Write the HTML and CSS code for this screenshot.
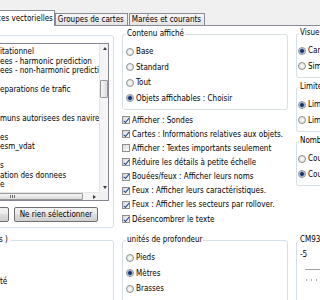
FILE: index.html
```html
<!DOCTYPE html>
<html lang="fr">
<head>
  <meta charset="UTF-8">
  <title>Cartes vectorielles</title>
  <link rel="stylesheet" href="styles.css">
</head>
<body>

  <div class="tabs">
    <div class="tab active">ces vectorielles</div>
    <div class="tab">Groupes de cartes</div>
    <div class="tab tab-next">Marées et courants</div>
  </div>

  <div class="panel">
    <div class="cols top">

      <!-- Liste des objets -->
      <div class="objets">
        <div class="listbox">
          <div class="items">
            <div>itationnel</div>
            <div>ees - harmonic prediction</div>
            <div>ees - non-harmonic prediction</div>
            <div>&nbsp;</div>
            <div>eparations de trafic</div>
            <div>&nbsp;</div>
            <div>&nbsp;</div>
            <div>muns autorisees des navires</div>
            <div>&nbsp;</div>
            <div>es</div>
            <div>esm_vdat</div>
            <div>&nbsp;</div>
            <div>s</div>
            <div>ation des donnees</div>
            <div>e</div>
          </div>
          <div class="vscroll">
            <span class="btn-arrow"><span class="arrow up"></span></span>
            <span class="vtrack"><span class="vthumb"></span></span>
            <span class="btn-arrow"><span class="arrow down"></span></span>
          </div>
          <div class="hscroll">
            <span class="hthumb"><span class="grip"></span></span>
            <span class="htrack"></span>
            <span class="btn-arrow"><span class="arrow right"></span></span>
          </div>
          <div class="corner"></div>
        </div>
        <div class="buttons">
          <button>Tout sélectionner</button>
          <button>Ne rien sélectionner</button>
        </div>
      </div>

      <!-- Contenu affiché -->
      <div class="col">
        <fieldset class="contenu">
          <legend>Contenu affiché</legend>
          <div class="opt"><span class="rb"></span>Base</div>
          <div class="opt"><span class="rb"></span>Standard</div>
          <div class="opt"><span class="rb"></span>Tout</div>
          <div class="opt"><span class="rb on"></span>Objets affichables : Choisir</div>
        </fieldset>
        <div class="checks">
          <div class="check"><span class="cb on"></span>Afficher : Sondes</div>
          <div class="check"><span class="cb on"></span>Cartes : Informations relatives aux objets.</div>
          <div class="check"><span class="cb"></span>Afficher : Textes importants seulement</div>
          <div class="check"><span class="cb on"></span>Réduire les détails à petite échelle</div>
          <div class="check"><span class="cb on"></span>Bouées/feux : Afficher leurs noms</div>
          <div class="check"><span class="cb on"></span>Feux : Afficher leurs caractéristiques.</div>
          <div class="check"><span class="cb on"></span>Feux : Afficher les secteurs par rollover.</div>
          <div class="check"><span class="cb on"></span>Désencombrer le texte</div>
        </div>
      </div>

      <!-- Colonne de droite -->
      <div class="col stack">
        <fieldset>
          <legend>Visuel des points</legend>
          <div class="opt"><span class="rb on"></span>Cartes papier</div>
          <div class="opt"><span class="rb"></span>Simplifié</div>
        </fieldset>
        <fieldset>
          <legend>Limites</legend>
          <div class="opt"><span class="rb on"></span>Limites simples</div>
          <div class="opt"><span class="rb"></span>Limites symbolisées</div>
        </fieldset>
        <fieldset>
          <legend>Nombre de couleurs</legend>
          <div class="opt"><span class="rb"></span>Couleurs 2</div>
          <div class="opt"><span class="rb on"></span>Couleurs 4</div>
        </fieldset>
      </div>
    </div>

    <div class="cols bottom">
      <fieldset class="clipped">
        <legend>s )</legend>
        <div class="cut-line">té</div>
      </fieldset>
      <fieldset>
        <legend>unités de profondeur</legend>
        <div class="opt"><span class="rb"></span>Pieds</div>
        <div class="opt"><span class="rb on"></span>Mètres</div>
        <div class="opt"><span class="rb"></span>Brasses</div>
      </fieldset>
      <fieldset class="stack-b">
        <legend>CM93 Zoom détail</legend>
        <div class="value">-5</div>
        <div class="slider"></div>
        <div class="ticks"></div>
      </fieldset>
    </div>
  </div>

</body>
</html>
```

FILE: styles.css
```css
/* General */
* {
  box-sizing: border-box;
}

body {
  margin: 0;
  overflow: hidden;
  background-color: #f0f0f0;
  font-family: "DejaVu Sans Condensed", "DejaVu Sans", sans-serif;
  font-stretch: condensed;
  font-size: 8px;
  color: #000;
}

/* Onglets */
.tabs {
  display: flex;
  align-items: flex-end;
  width: 420px;
  height: 26px;
  border-bottom: 1px solid #898c95;
}

.tab {
  height: 12px;
  padding: 0 3px 0 2px;
  border: 1px solid #898c95;
  border-bottom: 0;
  background: linear-gradient(#f7f7f7, #e3e3e3);
  line-height: 11px;
  white-space: nowrap;
}

.tab.active {
  height: 16px;
  margin: 0 0 -1px -12px;
  padding: 0 1px 0 8px;
  background: #fff;
  line-height: 15px;
}

.tab-next {
  margin-left: 1px;
}

/* Panneau */
.panel {
  width: 420px;
  height: 274px;
  padding-top: 2px;
  background-color: #fff;
}

.cols {
  display: grid;
  grid-template-columns: 114px 166px 1fr;
  column-gap: 8px;
  align-items: start;
}

.cols.top {
  height: 207px;
}

fieldset {
  min-width: 0;
  margin: 0;
  padding: 5px 3px 3px;
  border: 1px solid #d5dfe5;
  border-radius: 3px;
}

legend {
  padding: 0 1px;
  line-height: 10px;
  white-space: nowrap;
}

.opt {
  display: flex;
  align-items: center;
  height: 15.5px;
  white-space: nowrap;
}

/* Boutons radio et cases */
.rb {
  flex: none;
  width: 8px;
  height: 8px;
  margin-right: 2px;
  border: 1px solid #8e8f8f;
  border-radius: 50%;
  background: radial-gradient(circle, #fdfdfd, #dadada);
}

.rb.on {
  background: radial-gradient(circle, #1b2f5e 0, #1b2f5e 1.4px, #5f8fcf 2.1px, #dfe8f4 3px);
}

.cb {
  position: relative;
  flex: none;
  width: 8px;
  height: 8px;
  margin-right: 2px;
  border: 1px solid #8e8f8f;
  background: linear-gradient(135deg, #d6d9dd, #fafafa);
}

.cb.on::after {
  content: "";
  position: absolute;
  left: 1.6px;
  top: -0.4px;
  width: 2.4px;
  height: 4.6px;
  border: solid #21408c;
  border-width: 0 1.4px 1.4px 0;
  transform: rotate(40deg);
}

/* Liste des objets */
.objets {
  margin: 7px 0 0 -20px;
  padding: 7px 4px 5px 14px;
  border: 1px solid #d5dfe5;
  border-radius: 3px;
}

.listbox {
  display: grid;
  grid-template-columns: 1fr 9px;
  grid-template-rows: 148px 8px;
  height: 158px;
  border: 1px solid #828790;
  background-color: #fff;
}

.items {
  overflow: hidden;
  padding: 3px 0 0 4px;
  line-height: 9.5px;
  white-space: nowrap;
}

.vscroll {
  display: flex;
  flex-direction: column;
  border-left: 1px solid #e6e6e6;
  background-color: #f4f4f4;
}

.vtrack {
  flex: 1;
  padding-top: 27px;
}

.vthumb {
  display: block;
  height: 18px;
  border: 1px solid #979797;
  border-radius: 1px;
  background: linear-gradient(90deg, #f6f6f6, #dcdcdc);
}

.hscroll {
  display: flex;
  border-top: 1px solid #e6e6e6;
  background-color: #f4f4f4;
}

.hthumb {
  display: flex;
  align-items: center;
  width: 87px;
  border: 1px solid #979797;
  border-radius: 1px;
  background: linear-gradient(#f6f6f6, #dcdcdc);
}

.grip {
  width: 5px;
  height: 3px;
  margin-left: 13px;
  background: repeating-linear-gradient(90deg, #6d6d6d 0 1px, transparent 1px 2px);
}

.htrack {
  flex: 1;
}

.corner {
  background-color: #f0f0f0;
}

.btn-arrow {
  display: flex;
  flex: none;
  align-items: center;
  justify-content: center;
  width: 9px;
  height: 9px;
}

.hscroll .btn-arrow {
  height: 7px;
}

.arrow {
  width: 0;
  height: 0;
  border: 2px solid transparent;
}

.arrow.up {
  border-top: 0;
  border-bottom: 3px solid #3b3b3b;
}

.arrow.down {
  border-bottom: 0;
  border-top: 3px solid #3b3b3b;
}

.arrow.right {
  border-right: 0;
  border-left: 3px solid #3b3b3b;
}

.buttons {
  display: flex;
  justify-content: flex-end;
  gap: 5px;
  margin: 6px 11px 0 0;
}

.buttons button {
  flex: none;
  width: 84px;
  height: 15px;
  padding: 0;
  font: inherit;
  color: #000;
  white-space: nowrap;
  border: 1px solid #707070;
  border-radius: 2px;
  background: linear-gradient(#f2f2f2, #ebebeb 50%, #dddddd 50%, #cfcfcf);
}

/* Colonne du milieu */
.contenu {
  margin-top: 1px;
}

.checks {
  margin-top: 3px;
}

.check {
  display: flex;
  align-items: center;
  height: 14.15px;
  white-space: nowrap;
}

/* Colonne de droite */
.stack fieldset,
.stack-b {
  padding-left: 1px;
}

.stack legend,
.stack-b legend {
  margin-left: 1px;
}

.stack fieldset + fieldset {
  margin-top: 4px;
}

/* Ligne du bas */
.cols.bottom fieldset {
  height: 70px;
}

.clipped {
  margin-left: -20px;
  padding-left: 14px;
}

.clipped legend {
  margin-left: 3px;
  padding: 0 3px 0 1px;
}

.cut-line {
  margin-top: 27px;
  padding-left: 5px;
  line-height: 10px;
}

.value {
  padding-left: 2px;
  line-height: 10px;
}

.slider {
  height: 2px;
  margin: 9px 0 0 7px;
  border-top: 1px solid #a0a0a0;
  border-bottom: 1px solid #fff;
  background-color: #e0e0e0;
}

.ticks {
  height: 2px;
  margin: 8px 0 0 8px;
  background: repeating-linear-gradient(90deg, #a8a8a8 0 1px, transparent 1px 5px);
}
```
